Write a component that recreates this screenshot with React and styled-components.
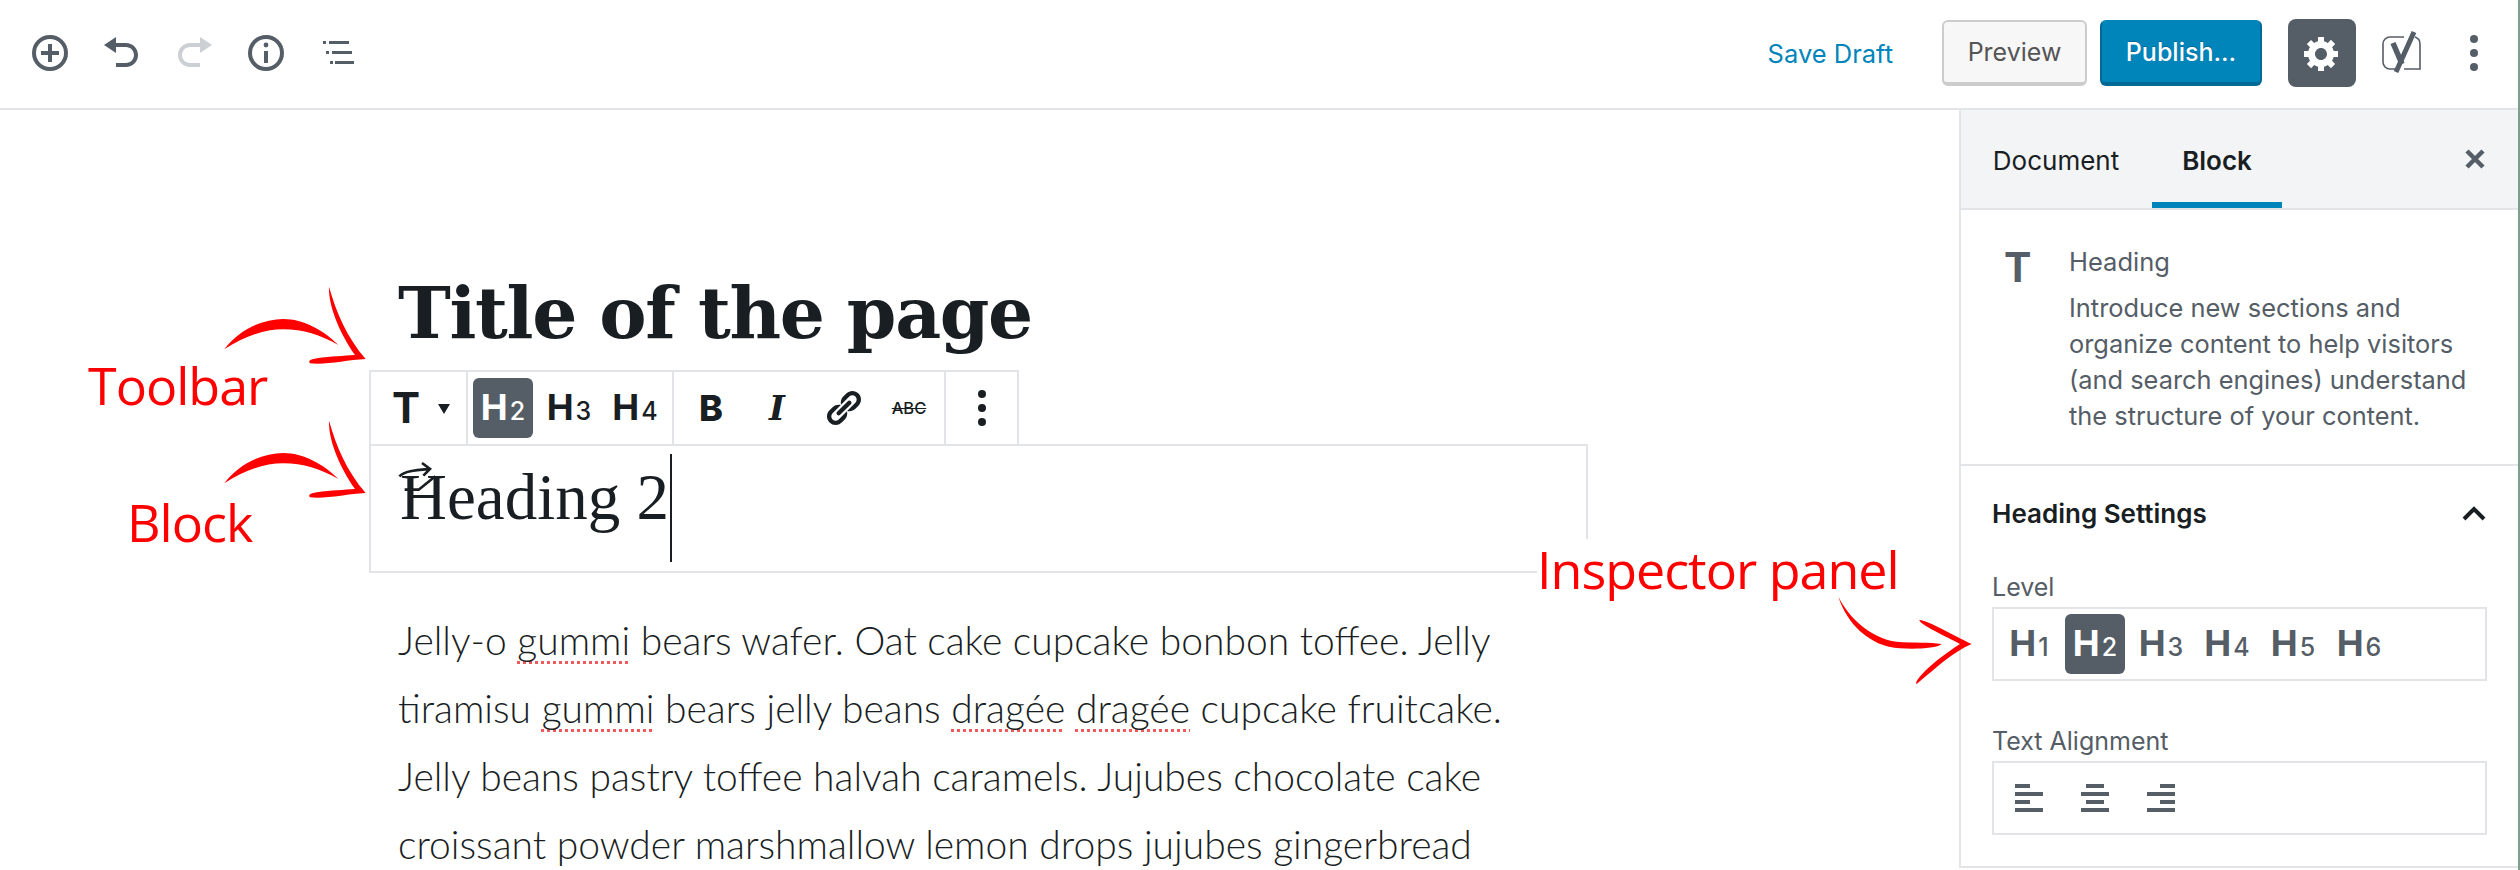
import styled, { createGlobalStyle } from "styled-components";

const GlobalStyle = createGlobalStyle`
  html, body {
    margin: 0;
    padding: 0;
    background: #fff;
  }
  * {
    box-sizing: border-box;
  }
`;

const Page = styled.div`
  position: relative;
  width: 2520px;
  height: 870px;
  overflow: hidden;
  display: flex;
  flex-direction: column;
  background: #fff;
  border-right: 2px solid #7f9f8c;
  font-family: Inter, "Liberation Sans", sans-serif;
  color: #191e23;
`;

const TopBar = styled.header`
  flex: none;
  height: 110px;
  display: flex;
  align-items: center;
  padding: 0 0 2px 14px;
  border-bottom: 2px solid #e2e4e7;
`;

const IconButton = styled.div`
  width: 72px;
  height: 72px;
  display: flex;
  align-items: center;
  justify-content: center;
  color: ${({ $off }) => ($off ? "#ccd0d4" : "#555d66")};
`;

const Spacer = styled.div`
  flex: 1;
`;

const SaveDraft = styled.span`
  margin-right: 49px;
  font-size: 25.5px;
  color: #0085ba;
`;

const Preview = styled.div`
  width: 145px;
  height: 66px;
  margin-right: 13px;
  display: flex;
  align-items: center;
  justify-content: center;
  background: #f7f7f7;
  border: 2px solid #ccc;
  border-bottom-width: 4px;
  border-radius: 6px;
  font-size: 25px;
  color: #555;
`;

const Publish = styled.div`
  width: 162px;
  height: 66px;
  margin-right: 26px;
  display: flex;
  align-items: center;
  justify-content: center;
  background: #0085ba;
  border: 2px solid #006a95;
  border-top-color: #0085ba;
  border-bottom-width: 4px;
  border-radius: 6px;
  font-size: 25px;
  font-weight: 500;
  color: #fff;
  text-shadow: 0 -1px 1px #006799;
`;

const GearButton = styled.div`
  width: 68px;
  height: 68px;
  margin-right: 24px;
  display: flex;
  align-items: center;
  justify-content: center;
  background: #555d66;
  border-radius: 8px;
  color: #fff;
`;

const Yoast = styled.svg`
  margin-right: 14px;
  color: #555d66;
`;

const MoreWrap = styled.div`
  width: 72px;
  display: flex;
  justify-content: center;
  margin-right: 8px;
  color: #555d66;
`;

const Body = styled.div`
  flex: 1;
  min-height: 0;
  display: flex;
`;

const Content = styled.main`
  flex: 1;
  padding-left: 369px;
`;

const Column = styled.div`
  width: 1219px;
`;

const Title = styled.h1`
  margin: 0;
  height: 260px;
  padding: 153px 0 0 29px;
  font-family: "DejaVu Serif", serif;
  font-size: 71px;
  line-height: 100px;
  font-weight: 700;
  letter-spacing: -1.35px;
  white-space: nowrap;
`;

const BlockToolbar = styled.div`
  width: 650px;
  height: 74px;
  display: flex;
  border: 2px solid #e2e4e7;
  border-bottom: 0;
`;

const ToolGroup = styled.div`
  width: ${({ $width }) => $width}px;
  display: flex;
  align-items: center;
  justify-content: ${({ $center }) => ($center ? "center" : "flex-start")};
  gap: 6px;
  padding-left: ${({ $pad }) => $pad || 0}px;
  border-right: ${({ $last }) => ($last ? "0" : "2px solid #e2e4e7")};
`;

const BlockType = styled.div`
  display: flex;
  align-items: center;
  padding-left: 21px;
  font-size: 42px;
  line-height: 1;
  font-weight: 700;
`;

const Caret = styled.span`
  margin-left: 18px;
  margin-top: 2px;
  width: 0;
  height: 0;
  border-left: 6px solid transparent;
  border-right: 6px solid transparent;
  border-top: 10px solid #191e23;
`;

const LevelButton = styled.div`
  flex: none;
  width: 60px;
  height: 60px;
  display: flex;
  align-items: baseline;
  justify-content: center;
  padding-top: 9px;
  border-radius: 6px;
  background: ${({ $active }) => ($active ? "#555d66" : "transparent")};
  color: ${({ $active, $tone }) => ($active ? "#fff" : $tone || "#191e23")};
`;

const LevelH = styled.span`
  font-size: 36px;
  line-height: 40px;
  font-weight: 700;
`;

const LevelNum = styled.span`
  margin-left: 2px;
  font-size: 25px;
  line-height: 40px;
  font-weight: 500;
`;

const FormatButton = styled.div`
  flex: none;
  width: 60px;
  height: 60px;
  display: flex;
  align-items: center;
  justify-content: center;
  font-family: ${({ $serif }) => ($serif ? '"DejaVu Serif", serif' : "inherit")};
  font-size: ${({ $size }) => $size || 36}px;
  font-weight: 800;
  font-style: ${({ $italic }) => ($italic ? "italic" : "normal")};
  color: #191e23;
`;

const Strike = styled.span`
  font-size: 16.5px;
  font-weight: 500;
  text-decoration: line-through;
`;

const BlockBox = styled.div`
  position: relative;
  height: 129px;
  padding: 8px 0 0 29px;
  border: 2px solid #e2e4e7;
`;

const HeadingText = styled.span`
  display: inline-block;
  height: 108px;
  padding-right: 1px;
  border-right: 2px solid #191e23;
  font-family: "Liberation Serif", serif;
  font-size: 65px;
  line-height: 87px;
  font-weight: 400;
  white-space: nowrap;
`;

const MoverIcon = styled.svg`
  position: absolute;
  left: 27px;
  top: 15px;
  color: #191e23;
`;

const Paragraph = styled.p`
  margin: 33px 0 0;
  padding-left: 29px;
  font-family: Lato, sans-serif;
  font-size: 39px;
  line-height: 68px;
  font-weight: 300;
  color: #191e23;
  white-space: nowrap;
`;

const Misspelt = styled.span`
  text-decoration: underline dotted #ef5a5a 3px;
  text-underline-offset: 6px;
  text-decoration-skip-ink: none;
`;

const Sidebar = styled.aside`
  flex: none;
  width: 559px;
  height: 758px;
  display: flex;
  flex-direction: column;
  border-left: 2px solid #e2e4e7;
  border-bottom: 2px solid #e2e4e7;
`;

const Tabs = styled.div`
  flex: none;
  height: 100px;
  display: flex;
  align-items: stretch;
  padding: 0 31px 0 0;
  background: #f3f4f5;
  border-bottom: 2px solid #e2e4e7;
`;

const Tab = styled.div`
  width: ${({ $width }) => $width}px;
  margin-left: ${({ $left }) => $left}px;
  display: flex;
  align-items: center;
  justify-content: center;
  padding-top: 8px;
  font-size: 26px;
  font-weight: ${({ $active }) => ($active ? 600 : 400)};
  border-bottom: 6px solid ${({ $active }) => ($active ? "#0085ba" : "transparent")};
`;

const CloseWrap = styled.div`
  margin-left: auto;
  display: flex;
  align-items: center;
  color: #555d66;
`;

const BlockCard = styled.section`
  flex: none;
  height: 256px;
  display: flex;
  padding: 34px 0 0 43px;
  border-bottom: 2px solid #e2e4e7;
  color: #555d66;
`;

const CardIcon = styled.div`
  width: 65px;
  font-size: 41px;
  line-height: 46px;
  font-weight: 700;
`;

const CardName = styled.div`
  font-size: 25.5px;
  line-height: 36px;
  margin-bottom: 10px;
`;

const CardText = styled.div`
  font-size: 25.4px;
  line-height: 36px;
  white-space: nowrap;
`;

const Settings = styled.section`
  flex: 1;
  padding: 32px 32px 0 31px;
`;

const SettingsHead = styled.div`
  display: flex;
  align-items: center;
  justify-content: space-between;
  height: 30px;
  font-size: 26px;
  font-weight: 600;
`;

const FieldLabel = styled.div`
  margin-top: ${({ $top }) => $top}px;
  height: 30px;
  display: flex;
  align-items: center;
  font-size: 25px;
  color: #555d66;
`;

const FieldBox = styled.div`
  margin-top: 5px;
  width: 495px;
  height: 74px;
  display: flex;
  align-items: center;
  gap: 6px;
  padding-left: 5px;
  border: 2px solid #e2e4e7;
`;

const AlignButton = styled.div`
  flex: none;
  width: 60px;
  height: 60px;
  display: flex;
  align-items: center;
  justify-content: center;
  color: #555d66;
`;

const Note = styled.div`
  position: absolute;
  left: ${({ $x }) => $x}px;
  top: ${({ $y }) => $y}px;
  padding-right: ${({ $pad }) => $pad || 0}px;
  background: ${({ $fill }) => ($fill ? "#fff" : "transparent")};
  font-family: "Open Sans", sans-serif;
  font-size: 52px;
  line-height: 60px;
  letter-spacing: -1px;
  color: #f00;
  white-space: nowrap;
`;

const ArrowSvg = styled.svg`
  position: absolute;
  left: ${({ $x }) => $x}px;
  top: ${({ $y }) => $y}px;
  color: #f00;
`;

const Dots = ({ size = 40 }) => (
  <svg width={size} height={size} viewBox="0 0 40 40" fill="currentColor">
    <circle cx="20" cy="6" r="4" />
    <circle cx="20" cy="20" r="4" />
    <circle cx="20" cy="34" r="4" />
  </svg>
);

const Level = ({ n, active, tone }) => (
  <LevelButton $active={active} $tone={tone}>
    <LevelH>H</LevelH>
    <LevelNum>{n}</LevelNum>
  </LevelButton>
);

const SwoopArrow = ({ x, y }) => (
  <ArrowSvg $x={x} $y={y} width="190" height="100" viewBox="0 0 570 300" fill="currentColor">
    <path d="M73 238C120 175 190 148 250 147C310 147 370 180 415 225C360 195 310 178 250 178C190 178 130 200 73 238Z" />
    <path d="M387 50C410 130 440 200 497 267C440 270 380 285 330 280C322 272 335 268 350 265C395 258 430 258 465 255C420 190 385 110 387 50Z" />
  </ArrowSvg>
);

const alignBars = {
  left: [0, 0, 0, 0],
  center: [5, 0, 5, 0],
  right: [13, 0, 13, 0],
};

const AlignIcon = ({ kind }) => (
  <svg width="28" height="28" viewBox="0 0 28 28" fill="currentColor">
    {alignBars[kind].map((x, i) => (
      <rect key={i} x={x} y={i * 8} width={i % 2 ? 28 : kind === "center" ? 18 : 15} height="4" />
    ))}
  </svg>
);

export default function App() {
  return (
    <Page>
      <GlobalStyle />
      <TopBar>
        <IconButton>
          <svg width="38" height="38" viewBox="0 0 38 38" fill="none" stroke="currentColor" strokeWidth="4">
            <circle cx="19" cy="19" r="16" />
            <path d="M19 10v18M10 19h18" />
          </svg>
        </IconButton>
        <IconButton>
          <svg width="40" height="40" viewBox="0 0 20 20" fill="currentColor">
            <path d="M12 5H7V2L1 6l6 4V7h5c2.2 0 4 1.8 4 4s-1.8 4-4 4H7v2h5c3.3 0 6-2.7 6-6s-2.7-6-6-6z" />
          </svg>
        </IconButton>
        <IconButton $off>
          <svg width="40" height="40" viewBox="0 0 20 20" fill="currentColor">
            <path d="M8 5h5V2l6 4-6 4V7H8c-2.2 0-4 1.8-4 4s1.8 4 4 4h5v2H8c-3.3 0-6-2.7-6-6s2.7-6 6-6z" />
          </svg>
        </IconButton>
        <IconButton>
          <svg width="38" height="38" viewBox="0 0 38 38" fill="none" stroke="currentColor" strokeWidth="4">
            <circle cx="19" cy="19" r="16" />
            <path d="M19 17v12" />
            <circle cx="19" cy="11" r="2.4" fill="currentColor" stroke="none" />
          </svg>
        </IconButton>
        <IconButton>
          <svg width="32" height="26" viewBox="0 0 32 26" fill="currentColor">
            <rect x="1" y="1" width="3" height="3" />
            <rect x="7" y="1" width="20" height="3" />
            <rect x="4" y="11" width="3" height="3" />
            <rect x="10" y="11" width="20" height="3" />
            <rect x="8" y="21" width="3" height="3" />
            <rect x="13" y="21" width="19" height="3" />
          </svg>
        </IconButton>
        <Spacer />
        <SaveDraft>Save Draft</SaveDraft>
        <Preview>Preview</Preview>
        <Publish>Publish...</Publish>
        <GearButton>
          <svg width="40" height="40" viewBox="0 0 20 20" fill="currentColor">
            <path d="M18 12h-2.18c-.17.7-.44 1.35-.81 1.93l1.54 1.54-2.1 2.1-1.54-1.54c-.58.36-1.23.63-1.91.79V19H8v-2.18c-.68-.16-1.33-.43-1.91-.79l-1.54 1.54-2.12-2.12 1.54-1.54c-.36-.58-.63-1.23-.79-1.91H1V9.03h2.17c.16-.7.44-1.35.8-1.94L2.43 5.55l2.1-2.1 1.54 1.54c.58-.37 1.24-.64 1.93-.81V2h3v2.18c.68.16 1.33.43 1.91.79l1.54-1.54 2.12 2.12-1.54 1.54c.36.59.64 1.24.8 1.94H18V12zm-8.5 1.5c1.66 0 3-1.34 3-3s-1.34-3-3-3-3 1.34-3 3 1.34 3 3 3z" />
          </svg>
        </GearButton>
        <Yoast width="44" height="44" viewBox="0 0 44 44" fill="none" stroke="currentColor">
          <path d="M24 6H10a7 7 0 0 0-7 7v18a7 7 0 0 0 7 7h6M35 6c3 1 5 3 5 7v25H24" strokeWidth="1.6" />
          <path d="M13 12l9 21" strokeWidth="5.5" />
          <path d="M34 1L16 41" strokeWidth="5" />
        </Yoast>
        <MoreWrap>
          <Dots />
        </MoreWrap>
      </TopBar>

      <Body>
        <Content>
          <Column>
            <Title>Title of the page</Title>
            <BlockToolbar>
              <ToolGroup $width={97}>
                <BlockType>
                  T
                  <Caret />
                </BlockType>
              </ToolGroup>
              <ToolGroup $width={206} $pad={5}>
                <Level n="2" active />
                <Level n="3" />
                <Level n="4" />
              </ToolGroup>
              <ToolGroup $width={272} $pad={7}>
                <FormatButton>B</FormatButton>
                <FormatButton $serif $italic $size={34}>I</FormatButton>
                <FormatButton>
                  <svg width="40" height="40" viewBox="0 0 20 20" fill="currentColor">
                    <path d="M17.74 2.76c1.68 1.69 1.68 4.41 0 6.1l-1.53 1.52c-1.12 1.12-2.7 1.47-4.14 1.09l2.62-2.61.76-.77.76-.76c.84-.84.84-2.2 0-3.04-.84-.85-2.2-.85-3.04 0l-.77.76-3.38 3.38c-.37-1.44-.02-3.02 1.1-4.14l1.52-1.53c1.69-1.68 4.42-1.68 6.1 0zM8.59 13.43l5.34-5.34c.42-.42.42-1.1 0-1.52-.44-.43-1.13-.39-1.53 0l-5.33 5.34c-.42.42-.42 1.1 0 1.52.44.43 1.13.39 1.52 0zm-.76 2.29l4.14-4.15c.38 1.44.03 3.02-1.09 4.14l-1.52 1.53c-1.69 1.68-4.41 1.68-6.1 0-1.68-1.68-1.68-4.42 0-6.1l1.53-1.52c1.12-1.12 2.7-1.47 4.14-1.1l-4.14 4.15c-.85.84-.85 2.2 0 3.05.84.84 2.2.84 3.04 0z" />
                  </svg>
                </FormatButton>
                <FormatButton>
                  <Strike>ABC</Strike>
                </FormatButton>
              </ToolGroup>
              <ToolGroup $width={71} $center $last>
                <Dots />
              </ToolGroup>
            </BlockToolbar>
            <BlockBox>
              <HeadingText>Heading 2</HeadingText>
              <MoverIcon width="40" height="34" viewBox="0 0 120 102" fill="none" stroke="currentColor" strokeWidth="8">
                <path d="M4 46C20 30 50 28 96 24M72 6l24 18-20 20" />
                <path d="M20 86h42L112 46" />
              </MoverIcon>
            </BlockBox>
            <Paragraph>
              Jelly-o <Misspelt>gummi</Misspelt> bears wafer. Oat cake cupcake bonbon toffee. Jelly
              <br />
              tiramisu <Misspelt>gummi</Misspelt> bears jelly beans <Misspelt>dragée</Misspelt>{" "}
              <Misspelt>dragée</Misspelt> cupcake fruitcake.
              <br />
              Jelly beans pastry toffee halvah caramels. Jujubes chocolate cake
              <br />
              croissant powder marshmallow lemon drops jujubes gingerbread
            </Paragraph>
          </Column>
        </Content>

        <Sidebar>
          <Tabs>
            <Tab $left={33} $width={124}>Document</Tab>
            <Tab $left={34} $width={130} $active>Block</Tab>
            <CloseWrap>
              <svg width="24" height="24" viewBox="0 0 24 24" fill="none" stroke="currentColor" strokeWidth="4.5">
                <path d="M4 4l16 16M20 4L4 20" />
              </svg>
            </CloseWrap>
          </Tabs>
          <BlockCard>
            <CardIcon>T</CardIcon>
            <div>
              <CardName>Heading</CardName>
              <CardText>
                Introduce new sections and
                <br />
                organize content to help visitors
                <br />
                (and search engines) understand
                <br />
                the structure of your content.
              </CardText>
            </div>
          </BlockCard>
          <Settings>
            <SettingsHead>
              Heading Settings
              <svg width="24" height="16" viewBox="0 0 24 16" fill="none" stroke="currentColor" strokeWidth="4">
                <path d="M2 14L12 4l10 10" />
              </svg>
            </SettingsHead>
            <FieldLabel $top={44}>Level</FieldLabel>
            <FieldBox>
              <Level n="1" tone="#555d66" />
              <Level n="2" tone="#555d66" active />
              <Level n="3" tone="#555d66" />
              <Level n="4" tone="#555d66" />
              <Level n="5" tone="#555d66" />
              <Level n="6" tone="#555d66" />
            </FieldBox>
            <FieldLabel $top={45}>Text Alignment</FieldLabel>
            <FieldBox>
              <AlignButton><AlignIcon kind="left" /></AlignButton>
              <AlignButton><AlignIcon kind="center" /></AlignButton>
              <AlignButton><AlignIcon kind="right" /></AlignButton>
            </FieldBox>
          </Settings>
        </Sidebar>
      </Body>

      <SwoopArrow x={200} y={270} />
      <SwoopArrow x={200} y={404} />
      <Note $x={88} $y={355}>Toolbar</Note>
      <Note $x={127} $y={492}>Block</Note>
      <Note $x={1537} $y={539} $fill $pad={8}>Inspector panel</Note>
      <ArrowSvg $x={1820} $y={580} width="180" height="120" viewBox="0 0 540 360" fill="currentColor">
        <path d="M55 50C85 110 150 175 230 185C280 190 330 185 365 192C350 205 290 208 240 205C150 200 80 130 55 50Z" />
        <path d="M298 120C310 115 400 165 455 192C400 215 340 270 290 312C280 305 330 250 420 192C380 170 300 135 298 120Z" />
      </ArrowSvg>
    </Page>
  );
}
